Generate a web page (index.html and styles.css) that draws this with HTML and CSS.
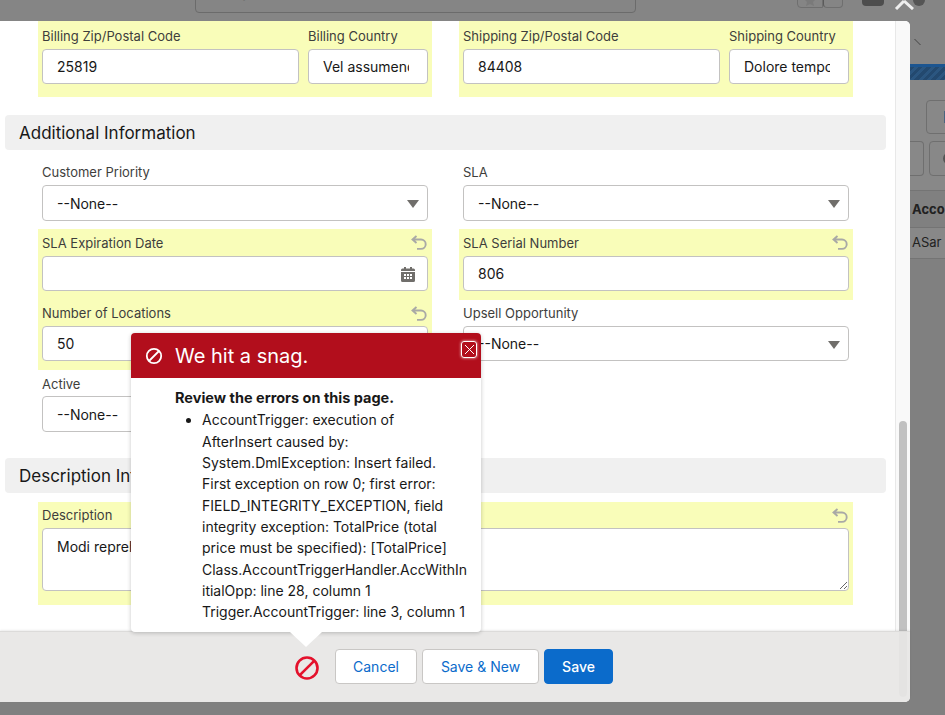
FILE: index.html
```html
<!DOCTYPE html>
<html lang="en">
<head>
    <meta charset="UTF-8">
    <title>New Account</title>
    <link rel="stylesheet" href="styles.css">
</head>
<body>

<div class="topbar">
    <div class="search">
        <svg class="search-icon" width="14" height="14" viewBox="0 0 14 14"><circle cx="6" cy="3" r="5" fill="none" stroke="#555" stroke-width="1.6"/><path d="M9.5 7l3.5 3" stroke="#555" stroke-width="1.6"/></svg>
        <span>Search...</span>
    </div>
    <div class="fav">
        <span class="fav-star"><svg width="16" height="8" viewBox="0 0 16 8"><path d="M1 0h14L11 4l1 4-4-2-4 2 1-4z" fill="#7a7a7a"/></svg></span>
        <span class="fav-menu"></span>
    </div>
    <span class="top-btn"></span>
    <svg class="top-x" width="34" height="10" viewBox="0 0 34 10"><path d="M2 9L10 1M10 1L19 9" stroke="#eee" stroke-width="3" fill="none"/><circle cx="25" cy="0" r="6" fill="#555"/></svg>
</div>

<div class="main">
    <div class="modal">
        <div class="modal-scroll">
            <div class="form">
                <div class="grid">
                    <div class="field changed first split">
                        <div class="part grow">
                            <label>Billing Zip/Postal Code</label>
                            <input type="text" value="25819">
                        </div>
                        <div class="part small">
                            <label>Billing Country</label>
                            <input type="text" value="Vel assumenda">
                        </div>
                    </div>
                    <div class="field changed first split">
                        <div class="part grow">
                            <label>Shipping Zip/Postal Code</label>
                            <input type="text" value="84408">
                        </div>
                        <div class="part small">
                            <label>Shipping Country</label>
                            <input type="text" value="Dolore tempore">
                        </div>
                    </div>
                </div>

                <h2 class="section section-one">Additional Information</h2>

                <div class="grid">
                    <div class="field tight">
                        <label>Customer Priority</label>
                        <div class="select"><select><option>--None--</option></select></div>
                    </div>
                    <div class="field tight">
                        <label>SLA</label>
                        <div class="select"><select><option>--None--</option></select></div>
                    </div>

                    <div class="field changed tall">
                        <label>SLA Expiration Date</label>
                        <svg class="undo" viewBox="0 0 16 16"><path d="M5.5 1L1.5 4.5L5.5 8M1.5 4.5H10a4.7 4.7 0 0 1 0 9.4H6" fill="none" stroke="#a9a9a6" stroke-width="1.9"/></svg>
                        <div class="date">
                            <input type="text">
                            <svg class="calendar" viewBox="0 0 14 15"><path d="M3 0h2v2H3zM9 0h2v2H9z" fill="#706e6b"/><path d="M1.5 1.5H12.500a1.500 1.500 0 0 1 1.500 1.500V4H0V3a1.500 1.500 0 0 1 1.500-1.500zM0 5h14v8.500a1.500 1.500 0 0 1-1.500 1.500h-11A1.500 1.500 0 0 1 0 13.500z" fill="#706e6b"/><path d="M3 7h2v2H3zM6 7h2v2H6zM9 7h2v2H9zM3 10h2v2H3zM6 10h2v2H6zM9 10h2v2H9z" fill="#fff"/></svg>
                        </div>
                    </div>
                    <div class="field changed tall">
                        <label>SLA Serial Number</label>
                        <svg class="undo" viewBox="0 0 16 16"><path d="M5.5 1L1.5 4.5L5.5 8M1.5 4.5H10a4.7 4.7 0 0 1 0 9.4H6" fill="none" stroke="#a9a9a6" stroke-width="1.9"/></svg>
                        <input type="text" value="806">
                    </div>

                    <div class="field changed">
                        <label>Number of Locations</label>
                        <svg class="undo" viewBox="0 0 16 16"><path d="M5.5 1L1.5 4.5L5.5 8M1.5 4.5H10a4.7 4.7 0 0 1 0 9.4H6" fill="none" stroke="#a9a9a6" stroke-width="1.9"/></svg>
                        <input type="text" value="50">
                    </div>
                    <div class="field short">
                        <label>Upsell Opportunity</label>
                        <div class="select"><select><option>--None--</option></select></div>
                    </div>

                    <div class="field lower">
                        <label>Active</label>
                        <div class="select"><select><option>--None--</option></select></div>
                    </div>
                </div>

                <h2 class="section section-two">Description Information</h2>

                <div class="wide">
                    <div class="field changed">
                        <label>Description</label>
                        <svg class="undo" viewBox="0 0 16 16"><path d="M5.5 1L1.5 4.5L5.5 8M1.5 4.5H10a4.7 4.7 0 0 1 0 9.4H6" fill="none" stroke="#a9a9a6" stroke-width="1.9"/></svg>
                        <textarea>Modi reprehenderit</textarea>
                    </div>
                </div>
            </div>
            <div class="scrollbar"><div class="thumb"></div></div>
        </div>

        <div class="footer">
            <svg class="error-icon" width="26" height="26" viewBox="0 0 26 26"><circle cx="13" cy="13" r="10.500" fill="none" stroke="#e4112c" stroke-width="2.600"/><path d="M5.800 20.200L20.200 5.800" stroke="#e4112c" stroke-width="2.600"/></svg>
            <button class="btn btn-cancel">Cancel</button>
            <button class="btn btn-new">Save &amp; New</button>
            <button class="btn btn-brand">Save</button>
            <span class="footer-thumb"></span>
        </div>

        <div class="popover">
            <div class="popover-head">
                <svg width="18" height="18" viewBox="0 0 18 18"><circle cx="9" cy="9" r="7.200" fill="none" stroke="#fff" stroke-width="1.800"/><path d="M4 14L14 4" stroke="#fff" stroke-width="1.800"/></svg>
                <h3>We hit a snag.</h3>
                <button class="popover-close"><svg width="11" height="11" viewBox="0 0 11 11"><path d="M1 1l9 9M10 1l-9 9" stroke="#fff" stroke-width="1"/></svg></button>
            </div>
            <div class="popover-body">
                <strong>Review the errors on this page.</strong>
                <ul>
                    <li>AccountTrigger: execution of<br>AfterInsert caused by:<br>System.DmlException: Insert failed.<br>First exception on row 0; first error:<br>FIELD_INTEGRITY_EXCEPTION, field<br>integrity exception: TotalPrice (total<br>price must be specified): [TotalPrice]<br>Class.AccountTriggerHandler.AccWithIn<br>itialOpp: line 28, column 1<br>Trigger.AccountTrigger: line 3, column 1</li>
                </ul>
            </div>
            <span class="popover-arrow"></span>
        </div>
    </div>

    <div class="behind">
        <div class="behind-top"><span class="chevron"></span></div>
        <div class="behind-band"></div>
        <div class="behind-tools">
            <div class="tool-row one"><span class="tool"><i class="tool-mark"></i></span></div>
            <div class="tool-row two"><span class="tool stub"></span><span class="tool"><i class="tool-ring"></i></span></div>
        </div>
        <div class="behind-head">Acco</div>
        <div class="behind-row">ASar</div>
    </div>
</div>

</body>
</html>
```

FILE: styles.css
```css
* {
    box-sizing: border-box;
}
html, body {
    margin: 0;
    height: 715px;
    overflow: hidden;
}
body {
    background-color: #808080;
    font-family: Inter, "Liberation Sans", sans-serif;
    color: #181818;
}

/* what's behind the modal */
.topbar {
    height: 21px;
    background-color: #858585;
    display: flex;
    align-items: flex-end;
    padding-left: 195px;
    overflow: hidden;
    position: relative;
}
.search {
    width: 441px;
    height: 30px;
    margin-bottom: 8px;
    flex: none;
    border: 1px solid #6b6b6b;
    border-radius: 4px;
    display: flex;
    align-items: flex-end;
    gap: 10px;
    padding: 0 0 10px 20px;
    font-size: 14px;
    line-height: 14px;
    color: #3c3c3c;
}
.fav {
    display: flex;
    margin-left: 161px;
    margin-bottom: 13px;
    flex: none;
}
.fav span {
    width: 26px;
    height: 22px;
    border: 1px solid #6f6f6f;
    display: flex;
    align-items: flex-end;
    justify-content: center;
    padding-bottom: 1px;
}
.fav-star {
    border-radius: 4px 0 0 4px;
}
.fav-menu {
    width: 20px !important;
    border-radius: 0 0 4px 4px;
    border-left: 1px solid #5a5a5a !important;
}
.top-btn {
    width: 22px;
    height: 20px;
    margin: 0 0 15px 19px;
    border-radius: 4px;
    background-color: #4d4d4d;
    flex: none;
}
.top-x {
    margin: 0 0 11px 10px;
    flex: none;
}

.main {
    display: flex;
    height: 694px;
}
.modal {
    width: 910px;
    height: 681px;
    flex: none;
    display: flex;
    flex-direction: column;
    background-color: #fff;
    border-radius: 0 5px 5px 0;
    position: relative;
    z-index: 1;
}
.modal-scroll {
    height: 610px;
    display: flex;
    overflow: hidden;
    border-radius: 0 5px 0 0;
}
.form {
    width: 895px;
    flex: none;
}

/* scrollbar */
.scrollbar {
    width: 15px;
    background-color: #f9f9f9;
    border-left: 1px solid #e8e8e8;
    padding: 400px 3px 0 3px;
}
.thumb {
    height: 300px;
    background-color: #c1c1c1;
    border-radius: 4px;
}

/* form */
.grid {
    display: grid;
    grid-template-columns: 394px 394px;
    column-gap: 27px;
    margin-left: 38px;
    align-items: start;
}
.wide {
    margin-left: 38px;
    width: 815px;
}
.field {
    padding: 0 4px 9px 4px;
    position: relative;
}
.field.changed {
    background-color: #f9fdb9;
}
.field.first {
    padding-bottom: 13px;
}
.field.tight {
    padding-bottom: 8px;
}
.split {
    display: flex;
    gap: 9px;
}
.part.grow {
    flex: 1;
    min-width: 0;
}
.part.small {
    width: 120px;
    flex: none;
}
.part.small input {
    padding-right: 18px;
}
label {
    display: block;
    height: 26px;
    padding-top: 5px;
    font-size: 13px;
    line-height: 16px;
    color: #3e3e3c;
}
.first label {
    height: 28px;
    padding-top: 7px;
}
.tall label {
    height: 27px;
    padding-top: 6px;
}
.lower label {
    padding-top: 6px;
}
input, select, textarea {
    display: block;
    width: 100%;
    height: 35px;
    margin: 0;
    padding: 0 15px 0 14px;
    font-family: inherit;
    font-size: 14px;
    color: #181818;
    background-color: #fff;
    border: 1px solid #c3c2c1;
    border-radius: 4px;
}
select {
    height: 36px;
    padding: 1px 0 0 14px;
    appearance: none;
    -webkit-appearance: none;
}
.short select {
    height: 35px;
    padding-top: 0;
}
.select {
    position: relative;
}
.select::after {
    content: "";
    position: absolute;
    right: 9px;
    top: 15px;
    border-left: 6.5px solid transparent;
    border-right: 6.5px solid transparent;
    border-top: 8px solid #706e6b;
}
.date {
    position: relative;
}
.calendar {
    position: absolute;
    right: 13px;
    top: 11px;
    width: 14px;
    height: 15px;
}
.undo {
    position: absolute;
    right: 5px;
    top: 6px;
    width: 16px;
    height: 16px;
}
textarea {
    height: 63px;
    padding-top: 8px;
    line-height: 20px;
    resize: vertical;
}
.wide .field {
    padding-bottom: 14px;
}

.section {
    height: 35px;
    margin: 0 9px 0 5px;
    padding-left: 14px;
    background-color: #f0f0f0;
    border-radius: 4px;
    font-size: 17px;
    font-weight: 400;
    line-height: 36px;
}
.section-one {
    margin-top: 18px;
    margin-bottom: 9px;
}
.section-two {
    margin-top: 17px;
    margin-bottom: 9px;
}

/* footer */
.footer {
    height: 71px;
    flex: none;
    background-color: #e9e8e7;
    border-top: 1px solid #dcdbda;
    border-radius: 0 0 5px 0;
    box-shadow: 0 -1px 2px rgba(0, 0, 0, 0.08);
    display: flex;
    align-items: flex-start;
    padding: 17px 0 0 294px;
    position: relative;
}
.footer-thumb {
    position: absolute;
    right: 3px;
    top: 0;
    bottom: 5px;
    width: 8px;
    border-radius: 0 0 4px 4px;
    background-color: rgba(0, 0, 0, 0.02);
}
.error-icon {
    margin: 6px 15px 0 0;
    flex: none;
}
.btn {
    height: 35px;
    margin-right: 5px;
    padding: 0;
    border: 1px solid #c9c7c5;
    border-radius: 4px;
    background-color: #fff;
    color: #0b6bcb;
    font-family: inherit;
    font-size: 14px;
}
.btn-cancel {
    width: 82px;
}
.btn-new {
    width: 117px;
}
.btn-brand {
    width: 69px;
    background-color: #0b6bcb;
    border-color: #0b6bcb;
    color: #fff;
    font-weight: 500;
}

/* error popover */
.popover {
    position: absolute;
    left: 131px;
    top: 312px;
    width: 350px;
    height: 299px;
    background-color: #fff;
    border-radius: 4px;
    box-shadow: 0 1px 4px rgba(0, 0, 0, 0.22);
    z-index: 2;
}
.popover-head {
    height: 45px;
    background-color: #b20e1c;
    border-radius: 4px 4px 0 0;
    color: #fff;
    display: flex;
    align-items: center;
    padding-left: 14px;
    gap: 12px;
    position: relative;
}
.popover-head h3 {
    margin: 0;
    font-size: 20px;
    font-weight: 400;
}
.popover-close {
    position: absolute;
    right: 4px;
    top: 8px;
    width: 16px;
    height: 17px;
    padding: 0;
    background: none;
    border: 1px solid #fff;
    border-radius: 3px;
    box-shadow: 0 0 3px rgba(255, 255, 255, 0.8);
    display: flex;
    align-items: center;
    justify-content: center;
}
.popover-body {
    padding: 9px 0 0 44px;
    font-size: 14px;
    line-height: 21.33px;
}
.popover-body strong {
    display: block;
    font-size: 14.5px;
}
.popover-body ul {
    margin: 1px 0 0 0;
    padding-left: 27px;
}
.popover-body li {
    white-space: nowrap;
}
.popover-arrow {
    position: absolute;
    left: 159px;
    bottom: -15px;
    width: 0;
    height: 0;
    border-left: 16px solid transparent;
    border-right: 16px solid transparent;
    border-top: 15px solid #fff;
}

/* right strip */
.behind {
    width: 35px;
    flex: none;
    overflow: hidden;
    font-size: 13px;
    white-space: nowrap;
}
.behind-top {
    height: 43px;
    background-color: #858585;
    padding-top: 18px;
}
.chevron {
    display: block;
    width: 8px;
    height: 6px;
    border-right: 1px solid #444;
    transform: skewX(45deg);
}
.behind-band {
    height: 16px;
    border-top: 3px solid #1c5590;
    background: repeating-linear-gradient(135deg, #23496f 0 3px, #2b5680 3px 6px);
}
.behind-tools {
    height: 110px;
    background-color: #888;
    padding-top: 20px;
}
.tool-row {
    display: flex;
}
.tool {
    display: block;
    height: 34px;
    border: 1px solid #6f6f6f;
    border-radius: 4px;
    width: 40px;
    flex: none;
    padding: 10px 0 0 13px;
}
.tool-row.one {
    padding-left: 16px;
    height: 41px;
}
.tool-row.one .tool {
    padding-left: 17px;
}
.tool-row.two {
    gap: 5px;
}
.tool.stub {
    width: 11px;
    border-left: none;
    border-radius: 0 4px 4px 0;
    height: 35px;
}
.tool-row.two .tool:last-child {
    height: 35px;
}
.tool-mark {
    display: block;
    width: 3px;
    height: 12px;
    background-color: #4a647f;
}
.tool-ring {
    display: block;
    width: 13px;
    height: 13px;
    border: 2px solid #555;
    border-radius: 50%;
}
.behind-head {
    height: 38px;
    padding: 10px 0 0 2px;
    background-color: #808080;
    border-top: 1px solid #747474;
    border-bottom: 1px solid #747474;
    font-weight: 700;
    color: #222;
}
.behind-row {
    height: 31px;
    padding: 6px 0 0 2px;
    background-color: #888;
    border-bottom: 1px solid #747474;
    color: #222;
}
```
